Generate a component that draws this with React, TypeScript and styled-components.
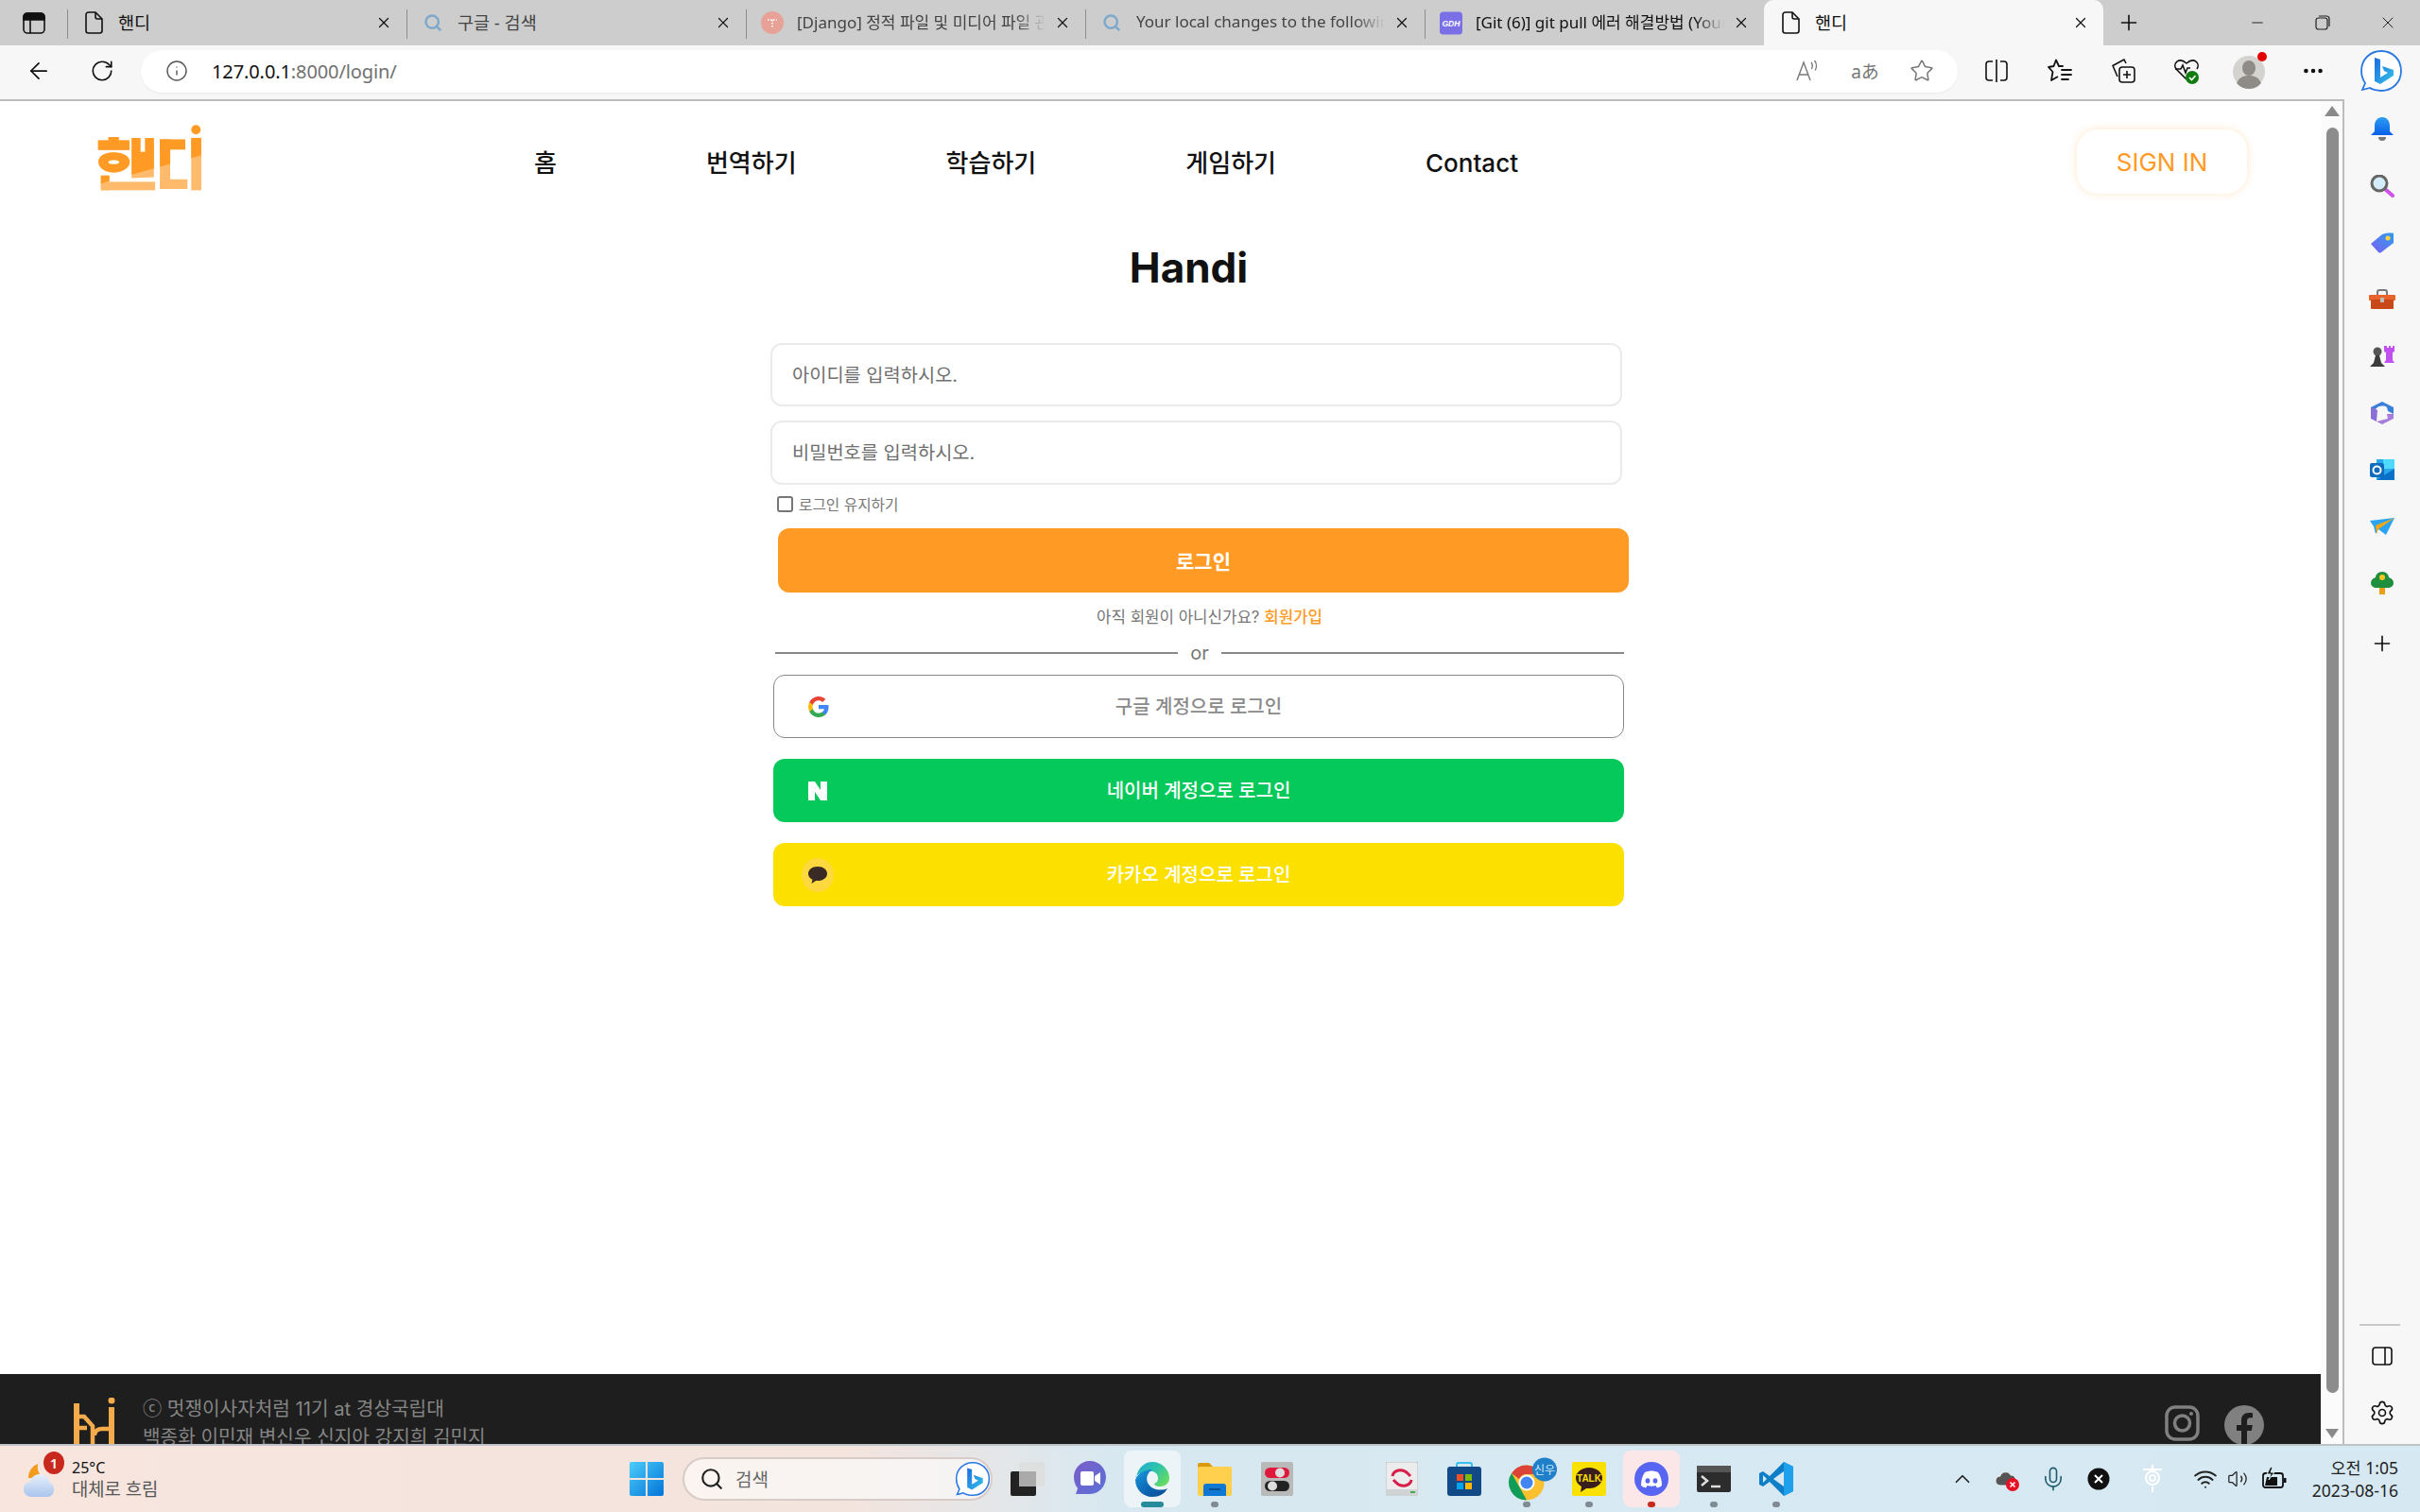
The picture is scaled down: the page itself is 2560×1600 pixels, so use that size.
import React from "react";
import styled, { createGlobalStyle } from "styled-components";
import { ArrowLeft, RotateCw, Info, Star, Plus, Minus, X, Search, Ellipsis, Settings, Mic, ChevronUp, Wifi, Volume2 } from "lucide-react";

const chromeFont = `"Noto Sans", "Noto Sans CJK KR", sans-serif`;
const pageFont = `Inter, "Noto Sans CJK KR", sans-serif`;
const orange = "#ff9a24";

const Global = createGlobalStyle`
  html, body { margin: 0; padding: 0; background: #fff; }
  * { box-sizing: border-box; }
`;

const Screen = styled.div`
  width: 2560px; height: 1600px; display: flex; flex-direction: column; overflow: hidden;
  font-family: ${chromeFont}; background: #f7f7f7; color: #111;
`;

/* ---- tab strip ---- */
const TabStrip = styled.div`
  height: 48px; flex: none; display: flex; background: #cdcdcd;
`;
const StripButton = styled.div`
  width: 71px; display: flex; align-items: center; justify-content: center;
`;
const Tab = styled.div<{ $active?: boolean }>`
  position: relative; width: 359px; display: flex; align-items: center; padding-left: 16px;
  background: ${(p) => (p.$active ? "#f7f7f7" : "transparent")};
  border-radius: ${(p) => (p.$active ? "10px 10px 0 0" : "0")};
  &::before {
    content: ""; position: absolute; left: 0; top: 10px; bottom: 7px; width: 1px;
    background: ${(p) => (p.$active ? "transparent" : "#8d8d8d")};
  }
`;
const TabIcon = styled.div`
  width: 24px; height: 26px; flex: none; display: flex; align-items: center; justify-content: center;
`;
const TabTitle = styled.div<{ $fade?: boolean; $dark?: boolean; $ko?: boolean }>`
  margin-left: 14px; width: 263px; flex: none; overflow: hidden; white-space: nowrap; font-size: ${(p) => (p.$ko ? 18.5 : 17)}px;
  color: ${(p) => (p.$dark ? "#111" : "#444")}; margin-top: -3px;
  ${(p) => p.$fade && "mask-image: linear-gradient(90deg,#000 88%,transparent 100%);"}
`;
const TabClose = styled.div`
  width: 20px; display: flex; justify-content: center; color: #111; margin-left: 8px;
`;
const NewTab = styled.div`
  width: 54px; display: flex; align-items: center; justify-content: center;
`;
const WindowButtons = styled.div`
  margin-left: auto; display: flex; height: 100%; align-items: center;
`;
const WindowButton = styled.div`
  width: 69px; display: flex; justify-content: center; color: #222;
`;

/* ---- toolbar ---- */
const Toolbar = styled.div`
  height: 57px; flex: none; display: flex; align-items: center; padding: 6px 0 9px 8px; background: #f7f7f7;
`;
const ToolButton = styled.div<{ $w?: number }>`
  width: ${(p) => p.$w ?? 67}px; flex: none; height: 100%; display: flex; align-items: center; justify-content: center;
`;
const AddressBar = styled.div`
  margin-left: 8px; margin-right: 7px; width: 1922px; height: 45px; flex: none; border-radius: 23px; background: #fff;
  display: flex; align-items: center; box-shadow: 0 1px 2px rgba(0,0,0,.06); padding-left: 26px; padding-right: 8px;
`;
const Url = styled.div`
  margin-left: 25px; font-size: 20px; margin-top: 1px; color: #707070; font-family: "Noto Sans", sans-serif; letter-spacing: -0.1px;
  b { font-weight: 400; color: #111; }
`;
const AddressActions = styled.div`
  margin-left: auto; display: flex; color: #777; font-size: 19px;
`;
const AddressAction = styled.div`
  width: 60px; display: flex; align-items: center; justify-content: center; height: 40px;
`;

/* ---- body ---- */
const BodyRow = styled.div`
  flex: 1; min-height: 0; display: flex;
`;
const PageFrame = styled.div`
  width: 2480px; flex: none; display: flex; border-top: 2px solid #bcbcbc; border-right: 2px solid #bcbcbc;
`;
const Page = styled.div`
  width: 2455px; flex: none; display: flex; flex-direction: column; background: #fff; font-family: ${pageFont}; overflow: hidden;
`;
const PageMain = styled.div`
  flex: 1; min-height: 0; display: flex; flex-direction: column;
`;
const ScrollRail = styled.div`
  flex: 1; background: #fbfbfb; display: flex; flex-direction: column; align-items: center; padding-top: 4px; padding-left: 1px;
`;
const ArrowUp = styled.div`
  width: 0; height: 0; border-left: 8px solid transparent; border-right: 8px solid transparent;
  border-bottom: 11px solid #8a8a8a; margin-top: 1px;
`;
const ArrowDown = styled.div`
  width: 0; height: 0; border-left: 7px solid transparent; border-right: 7px solid transparent;
  border-top: 10px solid #8a8a8a; margin-bottom: 6px;
`;
const Thumb = styled.div`
  width: 13px; flex: 1; border-radius: 7px; background: #8c8c8c; margin: 12px 0 38px;
`;

const Header = styled.header`
  height: 128px; flex: none; display: flex; align-items: center; padding: 0 78px 0 100px;
`;
const LogoWrap = styled.div`
  margin-top: -8px; width: 117px; height: 73px; flex: none;
`;
const Nav = styled.nav`
  margin-left: 348px; display: flex; align-items: baseline; gap: 158px; font-size: 26px; font-weight: 500; color: #111; margin-top: -2px;
`;
const SignIn = styled.button`
  margin-left: auto; width: 180px; height: 68px; border: none; border-radius: 22px; background: #fff; cursor: pointer;
  color: ${orange}; font-family: ${pageFont}; font-size: 26px; box-shadow: 0 0 8px rgba(255,154,36,.25);
`;
const Title = styled.h1`
  margin: 20px 0 0; padding-left: 60px; text-align: center; font-size: 44px; line-height: 56px; font-weight: 700; color: #111;
`;
const Form = styled.form`
  margin: 52px 0 0 815px; width: 940px; display: flex; flex-direction: column; align-items: flex-start;
`;
const Field = styled.input`
  width: 901px; height: 67px; flex: none; border: 2px solid #ebebeb; border-radius: 12px; padding: 0 21px; margin-bottom: 15px;
  font-family: ${pageFont}; font-size: 19.8px; background: #fff; outline: none;
  &::placeholder { color: #6f6f6f; }
  & + & { height: 68px; margin-bottom: 0; }
`;
const Keep = styled.label`
  display: flex; align-items: center; margin: 11px 0 0 7px; height: 18px; font-size: 15.7px; color: #777;
`;
const KeepBox = styled.input`
  width: 17px; height: 17px; margin: 0 6px 0 0; appearance: none; border: 2px solid #767676; border-radius: 3px; background: #fff;
`;
const LoginButton = styled.button`
  margin: 17px 0 0 8px; width: 900px; height: 68px; flex: none; border: none; border-radius: 12px; background: ${orange};
  color: #fff; font-family: ${pageFont}; font-size: 21px; font-weight: 700; padding-bottom: 2px;
`;
const SignUpLine = styled.div`
  width: 929px; text-align: center; margin-top: 15px; line-height: 22px; font-size: 16.8px; color: #777;
  a { color: ${orange}; font-weight: 500; text-decoration: none; }
`;
const Divider = styled.div`
  margin: 17px 0 0 5px; width: 898px; display: flex; align-items: center; gap: 13px; height: 20px; font-size: 20px; color: #777;
  &::before, &::after { content: ""; flex: 1; height: 2px; background: #888; }
`;
const Social = styled.div<{ $bg: string; $fg: string; $line?: string }>`
  position: relative; margin: ${(p) => (p.$line ? "13px" : "22px")} 0 0 3px; width: 900px; height: 67px; flex: none; border-radius: 12px;
  background: ${(p) => p.$bg}; color: ${(p) => p.$fg}; border: ${(p) => (p.$line ? `1.5px solid ${p.$line}` : "none")};
  display: flex; align-items: center; justify-content: center; font-size: 20px; font-weight: 500; padding-bottom: 2px;
`;
const SocialIcon = styled.div`
  position: absolute; left: 30px; top: 50%; transform: translateY(-50%); width: 34px; height: 36px;
  display: flex; align-items: center; justify-content: center;
`;
const KakaoDisc = styled.div`
  width: 36px; height: 36px; border-radius: 50%; background: #fdd83e; display: flex; align-items: center; justify-content: center;
`;

const Footer = styled.footer`
  height: 74px; flex: none; background: #1e1e1e; overflow: hidden; display: flex; padding: 22px 60px 0 76px; color: #858585;
`;
const FooterLogo = styled.div`
  width: 48px; margin-top: 3px; margin-right: 27px; flex: none;
`;
const FooterText = styled.div`
  font-size: 20.2px; line-height: 30px; white-space: nowrap; font-weight: 400;
`;
const FooterSocial = styled.div`
  margin-left: auto; display: flex; gap: 26px; align-items: flex-start; margin-top: 11px;
`;

/* ---- sidebar ---- */
const Sidebar = styled.aside`
  flex: 1; display: flex; flex-direction: column; background: #f7f7f7; padding: 2px 0 3px;
`;
const SideSlot = styled.div<{ $push?: number }>`
  height: 60px; flex: none; display: flex; align-items: center; justify-content: center; margin-top: ${(p) => p.$push ?? 0}px;
`;
const SideRule = styled.div`
  margin: auto 0 2px 16px; width: 43px; height: 2px; background: #c8c8c8;
`;

/* ---- taskbar ---- */
const Taskbar = styled.div`
  height: 72px; flex: none; display: flex; align-items: center; border-top: 2px solid #bcc4c8; padding-right: 23px;
  background: linear-gradient(90deg, #f7e5de 0%, #f4e4de 35%, #d7e8f1 46%, #d6e9f2 100%);
`;
const Weather = styled.div`
  position: relative; width: 666px; flex: none; display: flex; align-items: center; padding-left: 24px; height: 100%;
`;
const WeatherBadge = styled.div`
  position: absolute; left: 46px; top: 6px; width: 22px; height: 24px; border-radius: 50%; background: #c9291d; color: #fff;
  font-size: 15px; font-weight: 600; display: flex; align-items: center; justify-content: center;
`;
const WeatherText = styled.div`
  margin-left: 8px; display: flex; flex-direction: column; font-size: 18.8px; line-height: 23px; color: #555;
  span:first-child { font-size: 16px; color: #111; }
`;
const SearchBox = styled.div`
  margin-left: 20px; width: 328px; height: 46px; flex: none; border-radius: 23px; background: linear-gradient(90deg,#fbf4f0,#f6f4f4);
  border: 2px solid #d8ccc8; display: flex; align-items: center; padding: 0 0 0 16px; font-size: 19px; color: #666;
  span { margin-left: 12px; flex: 1; }
`;
const TaskSlots = styled.div`
  margin-left: 4px; display: flex;
`;
const TaskSlot = styled.div<{ $on?: string; $dot?: string; $wide?: boolean }>`
  position: relative; width: 66px; height: 60px; flex: none; display: flex; align-items: center; justify-content: center;
  &::before {
    content: ""; position: absolute; inset: 0 3px; border-radius: 8px; background: ${(p) => p.$on ?? "transparent"};
  }
  &::after {
    content: ""; position: absolute; bottom: 0; left: 50%; transform: translateX(-50%); height: 6px; border-radius: 3px;
    width: ${(p) => (p.$wide ? 24 : 8)}px; background: ${(p) => p.$dot ?? "transparent"};
  }
  svg { position: relative; z-index: 1; flex: none; }
`;
const Tray = styled.div`
  margin-left: 140px; display: flex; align-items: center; color: #222;
`;
const TrayItem = styled.div<{ $w?: number }>`
  width: ${(p) => p.$w ?? 48}px; flex: none; display: flex; justify-content: center; align-items: center;
`;
const Clock = styled.div`
  margin-left: auto; text-align: right; font-size: 17.5px; line-height: 24px; color: #222;
`;

/* ---- drawings ---- */
const Logo = () => (
  <svg width="117" height="73" viewBox="120 60 350 220">
    <defs>
      <clipPath id="logoTop"><polygon points="120,60 470,60 470,157 120,255" /></clipPath>
      <g id="logoShape">
        <rect x="163" y="102" width="33" height="12" rx="2" />
        <rect x="130" y="113" width="100" height="31" rx="2" />
        <path fillRule="evenodd" d="M180 151c30 0 51 13 51 30s-21 34-51 34-49-17-49-34 19-30 49-30Zm0 24c-11 0-18 3-18 7s7 7 18 7 18-3 18-7-7-7-18-7Z" />
        <path d="M237 105h28v45h15v-45h28v125l-71 3Z" />
        <rect x="139" y="225" width="27" height="47" />
        <rect x="139" y="245" width="173" height="27" />
        <rect x="327" y="110" width="81" height="32" />
        <rect x="327" y="110" width="33" height="158" />
        <rect x="327" y="237" width="88" height="31" />
        <rect x="427" y="105" width="32" height="167" />
      </g>
    </defs>
    <use href="#logoShape" fill="#ffbb6b" />
    <g clipPath="url(#logoTop)"><use href="#logoShape" fill={orange} /></g>
    <circle cx="442" cy="79" r="15" fill={orange} />
  </svg>
);

const FileIcon = () => (
  <svg width="19" height="24" viewBox="0 0 19 24" fill="none" stroke="#111" strokeWidth="1.6">
    <path d="M3.500 1h7.500l7 7v12.500a2.500 2.500 0 0 1-2.500 2.500h-12A2.500 2.500 0 0 1 1 20.500v-17A2.500 2.500 0 0 1 3.500 1Z" />
    <path d="M11 1v5a2 2 0 0 0 2 2h5" />
  </svg>
);
const TabSearch = () => <Search size={20} color="#7fa9cc" strokeWidth={3} />;
const DjangoIcon = () => (
  <svg width="24" height="24" viewBox="0 0 24 24">
    <circle cx="12" cy="12" r="12" fill="#e7a197" />
    <path d="M7 9h10M12 9v9" stroke="#fff" strokeWidth="1.6" strokeDasharray="1.6 1.4" />
  </svg>
);
const GdhIcon = () => (
  <svg width="25" height="25" viewBox="0 0 25 25">
    <rect width="25" height="25" rx="4" fill="#7b6fe8" />
    <text x="12.5" y="16" textAnchor="middle" fill="#fff" fontSize="9" fontWeight="700" fontStyle="italic" fontFamily="Liberation Sans">GDH</text>
  </svg>
);
const SidePanelToggle = () => (
  <svg width="24" height="23" viewBox="0 0 24 23" fill="none" stroke="#111" strokeWidth="1.6">
    <rect x="1" y="1" width="22" height="21" rx="4" />
    <path d="M1 5a4 4 0 0 1 4-4h14a4 4 0 0 1 4 4v3H1Z" fill="#111" />
    <path d="M8 8v14" />
  </svg>
);
const RestoreIcon = () => (
  <svg width="16" height="16" viewBox="0 0 16 16" fill="none" stroke="#222" strokeWidth="1.2">
    <rect x="1" y="3" width="12" height="12" rx="2.500" />
    <path d="M4 1h8a3 3 0 0 1 3 3v8" />
  </svg>
);
const ReadAloud = () => (
  <svg width="26" height="24" viewBox="0 0 26 24" fill="none" stroke="#777" strokeWidth="1.4">
    <path d="M1 22 8 3l7 19M3.500 16h9" />
    <path d="M16 3c1.600 1.600 1.600 5 .4 7M19.500 1c2.400 3 2.400 7.500.6 10.500" />
  </svg>
);
const SplitIcon = () => (
  <svg width="24" height="26" viewBox="0 0 24 26" fill="none" stroke="#111" strokeWidth="1.6">
    <path d="M8 3H4a3 3 0 0 0-3 3v14a3 3 0 0 0 3 3h4M16 3h4a3 3 0 0 1 3 3v14a3 3 0 0 1-3 3h-4M12 1v24" />
  </svg>
);
const FavIcon = () => (
  <svg width="26" height="26" viewBox="0 0 26 26" fill="none" stroke="#111" strokeWidth="1.8" strokeLinejoin="round">
    <path d="M9 1.500 6.500 8 1 9l4.500 5L4 23l7-4" />
    <path d="M9 1.500 12 8h4M15 12h10M15 17h10M15 22h7" strokeLinecap="round" />
  </svg>
);
const CollectionsIcon = () => (
  <svg width="26" height="28" viewBox="0 0 26 28" fill="none" stroke="#111" strokeWidth="1.6">
    <path d="M7 20 2 8.500 14 2l2 4" strokeLinejoin="round" />
    <rect x="9" y="10" width="16" height="16" rx="3" />
    <path d="M17 14v8M13 18h8" />
  </svg>
);
const HeartIcon = () => (
  <svg width="28" height="30" viewBox="0 0 28 30">
    <path d="M14 24 3 13C-1 7 6 0 14 7c8-7 15 0 11 6" fill="none" stroke="#111" strokeWidth="1.6" />
    <path d="M2 13h6l2-4 3 8 2-5h3" fill="none" stroke="#111" strokeWidth="1.6" />
    <circle cx="20" cy="22" r="7" fill="#107c10" />
    <path d="m17 22 2.500 2.500L23.500 20" stroke="#fff" strokeWidth="1.600" fill="none" />
  </svg>
);
const Avatar = () => (
  <svg width="40" height="42" viewBox="0 0 40 42">
    <circle cx="19" cy="22" r="17" fill="#d4d3d0" />
    <ellipse cx="19" cy="18" rx="7" ry="8" fill="#8f8c88" />
    <path d="M6 34c3-7 8-8 13-8s10 1 13 8a17 17 0 0 1-26 0Z" fill="#8f8c88" />
    <circle cx="33" cy="6" r="5" fill="#e40000" />
  </svg>
);
const BingBubble = ({ s = 46 }: { s?: number }) => (
  <svg width={s} height={s} viewBox="0 0 46 46">
    <defs>
      <linearGradient id="bingG" x1="0" y1="0" x2="1" y2="1"><stop offset="0" stopColor="#1b6ae0" /><stop offset="1" stopColor="#36c5e8" /></linearGradient>
    </defs>
    <path d="M23 2C11 2 2 11 2 23c0 6 2 10 4 13l-3 7 8-2c1 1 7 3 12 3 12 0 21-9 21-21S35 2 23 2Z" fill="#fff" stroke="#2a78e4" strokeWidth="1.800" />
    <path d="M16 9l6 2v19l8-5-4-2-2-5 12 4v6l-14 9-6-3Z" fill="url(#bingG)" />
  </svg>
);

const Bell = () => (
  <svg width="26" height="26" viewBox="0 0 26 26">
    <defs><linearGradient id="bellG" x1="0" y1="0" x2="0" y2="1"><stop offset="0" stopColor="#2a9df4" /><stop offset="1" stopColor="#0a5fe8" /></linearGradient></defs>
    <path d="M13 0c5 0 8 4 8 9v6l4 4H1l4-4V9c0-5 3-9 8-9Z" fill="url(#bellG)" />
    <path d="M9 21h8a4 4 0 0 1-8 0Z" fill="#777" />
  </svg>
);
const Glass = () => (
  <svg width="26" height="24" viewBox="0 0 26 24">
    <path d="m16 15 8 7" stroke="#d050e8" strokeWidth="4" strokeLinecap="round" />
    <circle cx="10" cy="9" r="8" fill="#d5ecfa" stroke="#666" strokeWidth="3" />
  </svg>
);
const TagIcon = () => (
  <svg width="26" height="22" viewBox="0 0 26 22">
    <defs><linearGradient id="tagG" x1="0" y1="1" x2="1" y2="0"><stop offset="0" stopColor="#7a5ff0" /><stop offset="1" stopColor="#2f9cf0" /></linearGradient></defs>
    <path d="M1 12 13 2c2-1 9-2 12-1v10L12 21c-1 .8-2 .8-3 0Z" fill="url(#tagG)" />
    <circle cx="19" cy="6" r="2.500" fill="#ffd23f" />
  </svg>
);
const Toolbox = () => (
  <svg width="28" height="22" viewBox="0 0 28 22">
    <path d="M9 6V3a2 2 0 0 1 2-2h6a2 2 0 0 1 2 2v3" fill="none" stroke="#777" strokeWidth="2" />
    <rect y="6" width="28" height="6" rx="1" fill="#e8622a" />
    <rect x="2" y="11" width="24" height="10" rx="1" fill="#c9481a" />
    <rect x="12" y="9" width="4" height="5" fill="#bbb" />
  </svg>
);
const ChessIcon = () => (
  <svg width="28" height="26" viewBox="0 0 28 26">
    <path d="M17 2h2v2h2V2h2v2h2V2h2v6l-2 1v8l2 3H16l2-3V9l-2-1V2Z" fill="#c050f0" />
    <circle cx="9" cy="8" r="4.500" fill="#555" />
    <path d="M7 12h4l2 8 4 4H1l4-4Z" fill="#3c3c3c" />
  </svg>
);
const M365 = () => (
  <svg width="26" height="26" viewBox="0 0 26 26">
    <path d="M13 1 25 7v7l-6-3-1-4c-3-2-8-2-11 1L1 12V7Z" fill="#3a7fd8" />
    <path d="M1 7v12l6 3 1-12Z" fill="#8a6fd8" />
    <path d="M25 14v5l-12 6-6-3 12-3-1-5Z" fill="#a77ddc" />
    <circle cx="13" cy="13" r="4.500" fill="#f7f7f7" />
  </svg>
);
const Outlook = () => (
  <svg width="26" height="24" viewBox="0 0 26 24">
    <rect x="7" y="1" width="19" height="22" rx="1" fill="#28a8ea" />
    <path d="M14 1h12v10H14Z" fill="#50d9ff" />
    <path d="M7 23l19-12v12Z" fill="#0a70c8" />
    <rect y="5" width="15" height="15" rx="2" fill="#0f6cbd" />
    <circle cx="7.500" cy="12.500" r="4" fill="none" stroke="#fff" strokeWidth="2" />
  </svg>
);
const Plane = () => (
  <svg width="28" height="20" viewBox="0 0 28 20">
    <path d="M1 4 27 1 18 19l-8-6-3 5-2-8Z" fill="#2aa4f0" />
    <path d="M7 9 27 1 10 13l-2 5Z" fill="#f0a818" />
  </svg>
);
const Tree = () => (
  <svg width="24" height="24" viewBox="0 0 24 24">
    <rect x="9" y="15" width="6" height="9" fill="#e8a010" />
    <path d="M12 0c4 0 7 3 7 6 3 1 5 3 5 6s-3 5-6 5H6c-3 0-6-2-6-5s2-5 5-6c0-3 3-6 7-6Z" fill="#1e8f3c" />
    <circle cx="12" cy="6" r="3" fill="#f8c820" />
  </svg>
);
const PanelIcon = () => (
  <svg width="22" height="22" viewBox="0 0 22 22" fill="none" stroke="#111" strokeWidth="1.600">
    <rect x="1" y="2" width="20" height="18" rx="3" />
    <path d="M14 2v18" />
  </svg>
);

const GoogleG = () => (
  <svg width="24" height="24" viewBox="0 0 48 48">
    <path fill="#4285F4" d="M45.100 24.500c0-1.600-.1-3.100-.4-4.500H24v8.500h11.800c-.5 2.700-2.100 5-4.400 6.600v5.500h7.100c4.200-3.800 6.600-9.500 6.600-16.100Z" />
    <path fill="#34A853" d="M24 46c5.900 0 10.900-2 14.500-5.300l-7.100-5.500c-2 1.300-4.500 2.100-7.400 2.100-5.700 0-10.500-3.800-12.200-9H4.500v5.700C8.100 41.100 15.500 46 24 46Z" />
    <path fill="#FBBC05" d="M11.800 28.300c-.4-1.300-.7-2.800-.7-4.300s.3-3 .7-4.300V14H4.500C3 17 2.100 20.400 2.100 24s.9 7 2.400 10Z" />
    <path fill="#EA4335" d="M24 10.700c3.200 0 6.100 1.100 8.400 3.300l6.300-6.300C34.900 4.200 29.900 2 24 2 15.500 2 8.100 6.900 4.500 14l7.300 5.700c1.700-5.200 6.500-9 12.200-9Z" />
  </svg>
);
const NaverN = () => (
  <svg width="20" height="20" viewBox="0 0 20 20"><path d="M0 0h7l6 9V0h7v20h-7L7 11v9H0Z" fill="#fff" /></svg>
);
const KakaoBubble = () => (
  <svg width="24" height="24" viewBox="0 0 24 24">
    <path d="M12 3C6 3 2 6.500 2 10.500c0 2.700 1.800 5 4.500 6.300L5.500 21l4.500-3c.7.100 1.300.1 2 .1 6 0 10-3.500 10-7.600S18 3 12 3Z" fill="#3a2a25" />
  </svg>
);

const FooterMark = () => (
  <svg width="48" height="54" viewBox="0 0 48 54" fill="none" stroke="#f5ab4c" strokeWidth="6">
    <path d="M5 6v48" />
    <path d="M5 20h8l9 10v24M7 32h9" strokeWidth="4.500" />
    <path d="M24 40c0-5 4-7 8-7h8" strokeWidth="4.500" />
    <path d="M42 10v44" />
    <circle cx="42" cy="3" r="3.500" fill="#f5ab4c" stroke="none" />
  </svg>
);
const InstaIcon = () => (
  <svg width="37" height="38" viewBox="0 0 37 38" fill="none" stroke="#808080" strokeWidth="3.500">
    <rect x="2" y="2" width="33" height="34" rx="9" />
    <circle cx="18.500" cy="19" r="8" />
    <circle cx="28" cy="9" r="2" fill="#808080" stroke="none" />
  </svg>
);
const FbIcon = () => (
  <svg width="42" height="42" viewBox="0 0 42 42">
    <circle cx="21" cy="21" r="21" fill="#808080" />
    <path d="M18 42V27h-5v-6h5v-5c0-5 3-8 8-8 2 0 4 .3 4 .3v5h-2.500c-2.500 0-3.500 1.500-3.500 3.200V21h5.800l-1 6H24v15Z" fill="#1e1e1e" />
  </svg>
);

const WeatherIcon = () => (
  <svg width="44" height="42" viewBox="0 0 44 42">
    <path d="M6 20c0-8 5-13 10-15-1 8 2 12 6 15Z" fill="#f29b1e" />
    <defs><linearGradient id="cloudG" x1="0" y1="0" x2="0" y2="1"><stop offset="0" stopColor="#e6f0fb" /><stop offset="1" stopColor="#a9c4ee" /></linearGradient></defs>
    <path d="M10 40c-6 0-9-4-9-8s3-8 7-8c1-5 5-8 10-8s11 4 11 10c3 0 4 3 4 6 0 5-3 8-7 8Z" fill="url(#cloudG)" />
  </svg>
);
const WinLogo = () => (
  <svg width="36" height="36" viewBox="0 0 36 36">
    <defs><linearGradient id="winG" x1="0" y1="0" x2="1" y2="1"><stop offset="0" stopColor="#4ccdfb" /><stop offset="1" stopColor="#0274d8" /></linearGradient></defs>
    <path d="M2 0h15v17H0V2a2 2 0 0 1 2-2Zm17 0h15a2 2 0 0 1 2 2v15H19ZM0 19h17v17H2a2 2 0 0 1-2-2Zm19 0h17v15a2 2 0 0 1-2 2H19Z" fill="url(#winG)" />
  </svg>
);
const TaskView = () => (
  <svg width="36" height="36" viewBox="0 0 36 36">
    <rect y="10" width="27" height="26" rx="2" fill="#222" />
    <rect x="9" y="0" width="27" height="26" rx="2" fill="#ddd" fillOpacity=".85" />
    <rect x="9" y="10" width="18" height="16" fill="#aaa" />
  </svg>
);
const MeetIcon = () => (
  <svg width="36" height="38" viewBox="0 0 36 38">
    <defs><linearGradient id="meetG" x1="0" y1="0" x2="1" y2="1"><stop offset="0" stopColor="#7b5cc8" /><stop offset="1" stopColor="#5a72d8" /></linearGradient></defs>
    <path d="M18 0c10 0 17 8 17 17s-7 18-17 18H3l2-6C2 25 1 21 1 17 1 8 8 0 18 0Z" fill="url(#meetG)" />
    <rect x="8" y="11" width="14" height="15" rx="2" fill="#fff" />
    <path d="m23 16 6-4v13l-6-4Z" fill="#fff" />
  </svg>
);
const EdgeIcon = () => (
  <svg width="36" height="37" viewBox="0 0 36 37">
    <defs>
      <linearGradient id="edgeTop" x1="0" y1="0" x2="1" y2=".7"><stop offset="0" stopColor="#1fa8d8" /><stop offset=".55" stopColor="#30c4a8" /><stop offset="1" stopColor="#66dc62" /></linearGradient>
      <linearGradient id="edgeLow" x1="0" y1="0" x2="1" y2="1"><stop offset="0" stopColor="#1a9ae0" /><stop offset=".6" stopColor="#0c62b0" /><stop offset="1" stopColor="#0a4a92" /></linearGradient>
    </defs>
    <path d="M1 16C3 6 10 0 18 0c10 0 18 8 18 17 0 6-5 9-10 9-4 0-6-2-6-3 3-1 4-3 4-6 0-5-5-8-9-7-7 1-13 3-15 6Z" fill="url(#edgeTop)" />
    <path d="M18 8C9 8 2 13 0 19c0 10 8 18 18 18 7 0 13-3 16-9-4 2-10 2-15 0-6-3-9-10-5-16 1-2 3-3 4-4Z" fill="url(#edgeLow)" />
  </svg>
);
const FolderIcon = () => (
  <svg width="36" height="36" viewBox="0 0 36 36">
    <path d="M0 3a2 2 0 0 1 2-2h10l5 5h-17Z" fill="#d99a0c" />
    <rect y="5" width="36" height="31" rx="2" fill="#ffcf4d" />
    <path d="M6 36V26a3 3 0 0 1 3-3h18a3 3 0 0 1 3 3v10Z" fill="#0f78d4" />
    <rect x="12" y="28" width="12" height="2" fill="#0a4f90" />
  </svg>
);
const ToggleApp = () => (
  <svg width="34" height="36" viewBox="0 0 34 36">
    <rect width="34" height="36" rx="2" fill="#b9b9b9" />
    <rect x="4" y="6" width="26" height="11" rx="5.500" fill="#e0183c" />
    <rect x="4" y="20" width="26" height="11" rx="5.500" fill="#222" />
    <circle cx="20" cy="11.500" r="5" fill="#ddd" />
    <circle cx="12" cy="25.500" r="5" fill="#ddd" />
  </svg>
);
const SyncIcon = () => (
  <svg width="34" height="36" viewBox="0 0 34 36">
    <rect width="34" height="36" rx="2" fill="#ececec" stroke="#bbb" />
    <path d="M7 15c1-6 10-9 16-3l3 3M27 19c-1 6-10 9-16 3l-3-3" fill="none" stroke="#d81e48" strokeWidth="3" />
    <rect y="29" width="34" height="7" fill="#cfd3d3" />
    <rect x="26" y="31" width="5" height="2" fill="#4ca84c" />
  </svg>
);
const StoreIcon = () => (
  <svg width="36" height="36" viewBox="0 0 36 36">
    <path d="M10 8V3a2 2 0 0 1 2-2h12a2 2 0 0 1 2 2v5" fill="none" stroke="#35c0f0" strokeWidth="2" />
    <rect y="5" width="36" height="31" rx="3" fill="#114a86" />
    <rect x="10" y="13" width="7" height="7" fill="#f25022" /><rect x="19" y="13" width="7" height="7" fill="#7fba00" />
    <rect x="10" y="22" width="7" height="7" fill="#00a4ef" /><rect x="19" y="22" width="7" height="7" fill="#ffb900" />
  </svg>
);
const ChromeIcon = () => (
  <svg width="66" height="46" viewBox="-14 0 66 46">
    <g transform="translate(0 8)">
      <circle cx="19" cy="19" r="18.500" fill="#fbc02d" />
      <path d="M19 .5A18.500 18.500 0 0 1 35 10H19a9 9 0 0 0-8 5L3 9A18.500 18.500 0 0 1 19 .5Z" fill="#db4437" />
      <path d="M3 9l8 14 8 14.500A18.500 18.500 0 0 1 3 9Z" fill="#0f9d58" />
      <circle cx="19" cy="19" r="8.500" fill="#fff" /><circle cx="19" cy="19" r="6.500" fill="#4285f4" />
    </g>
    <ellipse cx="38" cy="13" rx="13" ry="12.500" fill="#1f80c9" />
    <text x="38" y="18" textAnchor="middle" fontSize="12" fill="#cde6f7" fontFamily="Noto Sans CJK KR">신우</text>
  </svg>
);
const KakaoTalk = () => (
  <svg width="36" height="36" viewBox="0 0 36 36">
    <rect width="36" height="36" rx="2" fill="#fae100" />
    <path d="M18 6C10 6 4 11 4 17c0 4 2.500 7 6 9l-1 6 6-4h3c8 0 14-5 14-11S26 6 18 6Z" fill="#3a1d1d" />
    <text x="18" y="21" textAnchor="middle" fontSize="10" fontWeight="700" fill="#fae100" fontFamily="Liberation Sans">TALK</text>
  </svg>
);
const DiscordIcon = () => (
  <svg width="36" height="36" viewBox="0 0 36 36">
    <circle cx="18" cy="18" r="18" fill="#5865f2" />
    <path d="M11 11c5-2 9-2 14 0 3 4 4 9 4 14-2 1.500-3.500 2-5 2.500l-1.500-2.500c-3 1-6 1-9 0L12 27.500c-1.500-.5-3-1-5-2.500 0-5 1-10 4-14Z" fill="#fff" />
    <ellipse cx="14" cy="20" rx="2.400" ry="2.800" fill="#5865f2" /><ellipse cx="22" cy="20" rx="2.400" ry="2.800" fill="#5865f2" />
  </svg>
);
const TerminalIcon = () => (
  <svg width="36" height="28" viewBox="0 0 36 28">
    <rect width="36" height="28" rx="2" fill="#2c2c2c" />
    <rect width="36" height="7" fill="#555" />
    <path d="m5 11 6 5-6 5" fill="none" stroke="#ddd" strokeWidth="2.500" />
    <path d="M15 22h10" stroke="#ddd" strokeWidth="2.500" />
  </svg>
);
const VsCode = () => (
  <svg width="36" height="36" viewBox="0 0 36 36">
    <path d="M26 0 36 5v26l-10 5L11 21l-7 5-4-2v-12l4-2 7 5Z" fill="#0c7fc6" />
    <path d="M26 0 36 5v26l-10 5V25L15 18l11-8Z" fill="#1fa0ec" />
    <path d="M4 14v8l4-4Z" fill="#d6e9f2" /><path d="M15 18l11 8V10Z" fill="#d6e9f2" />
  </svg>
);
const CloudX = () => (
  <svg width="28" height="28" viewBox="0 0 28 28">
    <path d="M6 21a5 5 0 0 1 0-10c1-5 9-6 11-1 4 0 6 3 5 7l-5 4Z" fill="#555" stroke="#eee" />
    <circle cx="19" cy="20" r="7" fill="#e81123" />
    <path d="m16.500 17.500 5 5m0-5-5 5" stroke="#fff" strokeWidth="1.600" />
  </svg>
);
const XCircle = () => (
  <svg width="24" height="24" viewBox="0 0 24 24">
    <circle cx="12" cy="12" r="11.500" fill="#111" />
    <path d="m8 8 8 8m0-8-8 8" stroke="#fff" strokeWidth="2" />
  </svg>
);
const UsbGlyph = () => (
  <svg width="22" height="32" viewBox="0 0 22 32" fill="none" stroke="#fff" strokeWidth="2">
    <path d="M1 6h20M11 1v8M11 24v6" />
    <circle cx="11" cy="15" r="7" /><circle cx="11" cy="15" r="3" />
  </svg>
);
const Battery = () => (
  <svg width="26" height="26" viewBox="0 0 26 26">
    <rect x="1" y="7" width="21" height="15" rx="2.500" fill="none" stroke="#111" strokeWidth="1.800" />
    <path d="M3 20l2-9h11v9Z" fill="#111" /><rect x="23" y="12" width="2.500" height="5" fill="#111" />
    <path d="M9 0 5 8h4l-2 6 6-8H9l2-5Z" fill="#111" stroke="#d6e9f2" />
  </svg>
);

const tabs = [
  { icon: <FileIcon />, title: "핸디", dark: true, ko: true },
  { icon: <TabSearch />, title: "구글 - 검색", ko: true },
  { icon: <DjangoIcon />, title: "[Django] 정적 파일 및 미디어 파일 관리", fade: true },
  { icon: <TabSearch />, title: "Your local changes to the following files", fade: true },
  { icon: <GdhIcon />, title: "[Git (6)] git pull 에러 해결방법 (Your local", fade: true, dark: true },
];

export default function App() {
  return (
    <Screen>
      <Global />
      <TabStrip>
        <StripButton><SidePanelToggle /></StripButton>
        {tabs.map((t) => (
          <Tab key={t.title}>
            <TabIcon>{t.icon}</TabIcon>
            <TabTitle $fade={t.fade} $dark={t.dark} $ko={t.ko}>{t.title}</TabTitle>
            <TabClose><X size={18} strokeWidth={1.6} /></TabClose>
          </Tab>
        ))}
        <Tab $active>
          <TabIcon><FileIcon /></TabIcon>
          <TabTitle $dark $ko>핸디</TabTitle>
          <TabClose><X size={18} strokeWidth={1.6} /></TabClose>
        </Tab>
        <NewTab><Plus size={26} strokeWidth={1.5} /></NewTab>
        <WindowButtons>
          <WindowButton><Minus size={18} strokeWidth={1.3} /></WindowButton>
          <WindowButton><RestoreIcon /></WindowButton>
          <WindowButton><X size={20} strokeWidth={1.2} /></WindowButton>
        </WindowButtons>
      </TabStrip>

      <Toolbar>
        <ToolButton $w={66}><ArrowLeft size={28} strokeWidth={1.5} /></ToolButton>
        <ToolButton><RotateCw size={26} strokeWidth={1.5} /></ToolButton>
        <AddressBar>
          <Info size={24} strokeWidth={1.4} color="#555" />
          <Url><b>127.0.0.1</b>:8000/login/</Url>
          <AddressActions>
            <AddressAction><ReadAloud /></AddressAction>
            <AddressAction>aあ</AddressAction>
            <AddressAction><Star size={26} strokeWidth={1.4} color="#777" /></AddressAction>
          </AddressActions>
        </AddressBar>
        <ToolButton><SplitIcon /></ToolButton>
        <ToolButton><FavIcon /></ToolButton>
        <ToolButton><CollectionsIcon /></ToolButton>
        <ToolButton><HeartIcon /></ToolButton>
        <ToolButton><Avatar /></ToolButton>
        <ToolButton><Ellipsis size={26} strokeWidth={2.2} /></ToolButton>
        <ToolButton $w={77}><BingBubble /></ToolButton>
      </Toolbar>

      <BodyRow>
        <PageFrame>
          <Page>
            <PageMain>
              <Header>
                <LogoWrap><Logo /></LogoWrap>
                <Nav>
                  <span>홈</span><span>번역하기</span><span>학습하기</span><span>게임하기</span><span>Contact</span>
                </Nav>
                <SignIn>SIGN IN</SignIn>
              </Header>
              <Title>Handi</Title>
              <Form>
                <Field placeholder="아이디를 입력하시오." />
                <Field placeholder="비밀번호를 입력하시오." />
                <Keep><KeepBox type="checkbox" />로그인 유지하기</Keep>
                <LoginButton type="button">로그인</LoginButton>
                <SignUpLine>아직 회원이 아니신가요? <a href="#signup">회원가입</a></SignUpLine>
                <Divider>or</Divider>
                <Social $bg="#fff" $fg="#8a8a8a" $line="#888">
                  <SocialIcon><GoogleG /></SocialIcon>구글 계정으로 로그인
                </Social>
                <Social $bg="#05c95a" $fg="#fff">
                  <SocialIcon><NaverN /></SocialIcon>네이버 계정으로 로그인
                </Social>
                <Social $bg="#fce000" $fg="#fff">
                  <SocialIcon><KakaoDisc><KakaoBubble /></KakaoDisc></SocialIcon>카카오 계정으로 로그인
                </Social>
              </Form>
            </PageMain>
            <Footer>
              <FooterLogo><FooterMark /></FooterLogo>
              <FooterText>ⓒ 멋쟁이사자처럼 11기 at 경상국립대<br />백종화 이민재 변신우 신지아 강지희 김민지</FooterText>
              <FooterSocial><InstaIcon /><FbIcon /></FooterSocial>
            </Footer>
          </Page>
          <ScrollRail>
            <ArrowUp />
            <Thumb />
            <ArrowDown />
          </ScrollRail>
        </PageFrame>
        <Sidebar>
          <SideSlot><Bell /></SideSlot>
          <SideSlot><Glass /></SideSlot>
          <SideSlot><TagIcon /></SideSlot>
          <SideSlot><Toolbox /></SideSlot>
          <SideSlot><ChessIcon /></SideSlot>
          <SideSlot><M365 /></SideSlot>
          <SideSlot><Outlook /></SideSlot>
          <SideSlot><Plane /></SideSlot>
          <SideSlot><Tree /></SideSlot>
          <SideSlot $push={4}><Plus size={26} strokeWidth={1.5} /></SideSlot>
          <SideRule />
          <SideSlot><PanelIcon /></SideSlot>
          <SideSlot><Settings size={28} strokeWidth={1.4} /></SideSlot>
        </Sidebar>
      </BodyRow>

      <Taskbar>
        <Weather>
          <WeatherIcon />
          <WeatherBadge>1</WeatherBadge>
          <WeatherText><span>25°C</span><span>대체로 흐림</span></WeatherText>
        </Weather>
        <WinLogo />
        <SearchBox>
          <Search size={26} strokeWidth={2} color="#222" />
          <span>검색</span>
          <BingBubble s={38} />
        </SearchBox>
        <TaskSlots>
          <TaskSlot><TaskView /></TaskSlot>
          <TaskSlot><MeetIcon /></TaskSlot>
          <TaskSlot $on="#ecf4f8" $dot="#268c9c" $wide><EdgeIcon /></TaskSlot>
          <TaskSlot $dot="#7f8a92"><FolderIcon /></TaskSlot>
          <TaskSlot><ToggleApp /></TaskSlot>
          <TaskSlot />
          <TaskSlot><SyncIcon /></TaskSlot>
          <TaskSlot><StoreIcon /></TaskSlot>
          <TaskSlot $dot="#7f8a92"><ChromeIcon /></TaskSlot>
          <TaskSlot $dot="#7f8a92"><KakaoTalk /></TaskSlot>
          <TaskSlot $on="#fbe6e8" $dot="#c9291d"><DiscordIcon /></TaskSlot>
          <TaskSlot $dot="#7f8a92"><TerminalIcon /></TaskSlot>
          <TaskSlot $dot="#7f8a92"><VsCode /></TaskSlot>
        </TaskSlots>
        <Tray>
          <TrayItem><ChevronUp size={26} strokeWidth={1.6} /></TrayItem>
          <TrayItem><CloudX /></TrayItem>
          <TrayItem><Mic size={28} strokeWidth={1.4} color="#1f5d6e" /></TrayItem>
          <TrayItem><XCircle /></TrayItem>
          <TrayItem $w={66}><UsbGlyph /></TrayItem>
          <TrayItem $w={46}><Wifi size={26} strokeWidth={1.8} /></TrayItem>
          <TrayItem $w={22}><Volume2 size={26} strokeWidth={1.4} /></TrayItem>
          <TrayItem $w={56}><Battery /></TrayItem>
        </Tray>
        <Clock>오전 1:05<br />2023-08-16</Clock>
      </Taskbar>
    </Screen>
  );
}
